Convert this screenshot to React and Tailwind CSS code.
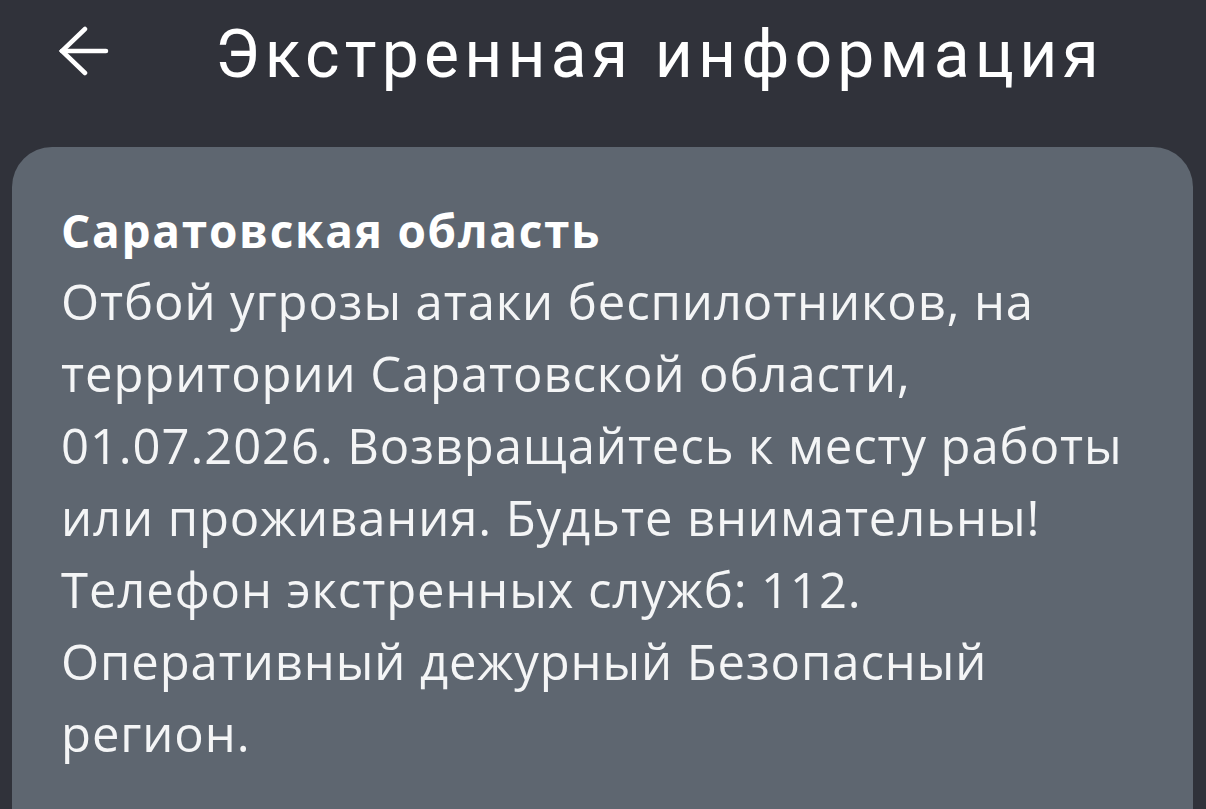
import React from 'react';

const BackArrow = () => (
  <svg width="52" height="50" viewBox="0 0 52 50" fill="none" stroke="currentColor" strokeWidth="4.5" strokeLinecap="round" strokeLinejoin="miter">
    <path d="M4 25H48" />
    <path d="M27 3L4 25l23 22" />
  </svg>
);

const alertText = [
  'Отбой угрозы атаки беспилотников, на',
  'территории Саратовской области,',
  '01.07.2026. Возвращайтесь к месту работы',
  'или проживания. Будьте внимательны!',
  'Телефон экстренных служб: 112.',
  'Оперативный дежурный Безопасный',
  'регион.',
];

export default function App() {
  return (
    <div className="w-[1206px] h-[809px] overflow-hidden bg-[#30323a] flex flex-col">
      <header className="h-[147px] flex items-start text-white">
        <div className="w-[160px] pl-[58px] pt-[26px]">
          <BackArrow />
        </div>
        <h1 className="ml-[55px] mt-[15px] text-[66px] leading-[80px] tracking-[5.2px] font-['Roboto',sans-serif] font-normal whitespace-nowrap">
          Экстренная информация
        </h1>
      </header>

      <section className="mx-[12px] w-[1181px] flex-1 bg-[#5e6670] rounded-t-[40px] pl-[49px] pt-[52px] font-['Open_Sans',sans-serif] text-white">
        <h2 className="text-[46px] leading-[63px] font-bold tracking-[1.7px]">Саратовская область</h2>
        <p className="mt-[3px] text-[49px] leading-[72px] font-normal tracking-[0.9px] text-[#f4f5f6]">
          {alertText.map((line) => (
            <span key={line} className="block whitespace-nowrap">{line}</span>
          ))}
        </p>
      </section>
    </div>
  );
}
